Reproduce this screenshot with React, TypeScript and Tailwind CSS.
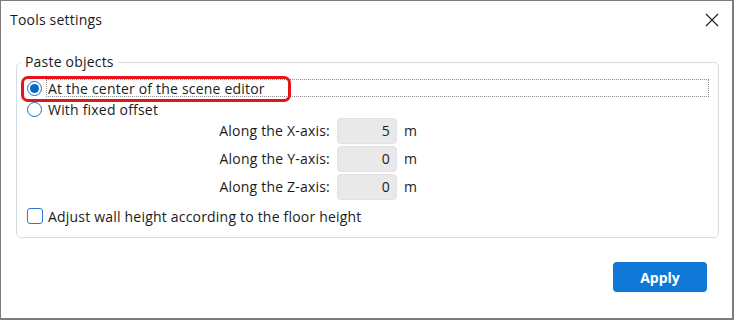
import React, { useState } from 'react';

const font = { fontFamily: '"Open Sans", "Noto Sans", sans-serif' };

const Radio: React.FC<{ checked: boolean }> = ({ checked }) => (
  <span className="flex h-[15px] w-[15px] shrink-0 items-center justify-center rounded-full border border-[#1a6fc9] bg-white">
    {checked && <span className="h-[9px] w-[9px] rounded-full bg-[#0a68c4]" />}
  </span>
);

const AxisRow: React.FC<{ label: string; value: string }> = ({ label, value }) => (
  <>
    <span className="text-right leading-[26px] text-[#1b1b1b]">{label}</span>
    <span className="h-[26px] rounded-[4px] border border-[#e2e2e2] bg-[#e9e9e9] pr-[6px] text-right leading-[24px] text-[#1b1b1b]">
      {value}
    </span>
    <span className="leading-[26px] text-[#1b1b1b]">m</span>
  </>
);

const App: React.FC = () => {
  const [mode] = useState<'center' | 'offset'>('center');

  return (
    <div
      className="relative flex h-[320px] w-[734px] flex-col border-t border-l border-r-2 border-b-2 border-[#7c7c7c] bg-white text-[14px] tracking-[0.2px]"
      style={font}
    >
      <div className="flex h-[37px] items-center justify-between pl-[9px] pr-[13px]">
        <span className="text-[14px] text-[#1a1a1a]">Tools settings</span>
        <svg width="14" height="14" viewBox="0 0 14 14" className="text-[#1f1f1f]">
          <path d="M1 1 L13 13 M13 1 L1 13" stroke="currentColor" strokeWidth="1.1" fill="none" />
        </svg>
      </div>

      <fieldset className="ml-[15px] mt-[15px] w-[703px] rounded-[5px] border border-[#d3dde6] px-[4px] pb-[12px]">
        <legend className="px-[4px] leading-[18px] text-[#1b1b1b]">Paste objects</legend>
        <div className="pl-[6px] pr-[5px]">
          <div className="mt-[8px] flex h-[18px] items-center gap-[4px]">
            <Radio checked={mode === 'center'} />
            <span className="flex h-[18px] flex-1 items-center border border-dotted border-[#8c8c8c] pl-[1px] text-[#1b1b1b]">
              At the center of the scene editor
            </span>
          </div>
          <div className="mt-[3px] flex h-[18px] items-center gap-[6px]">
            <Radio checked={mode === 'offset'} />
            <span className="text-[#1b1b1b]">With fixed offset</span>
          </div>
          <div className="grid grid-cols-[303px_60px_auto] gap-x-[7px] gap-y-[2px]">
            <AxisRow label="Along the X-axis:" value="5" />
            <AxisRow label="Along the Y-axis:" value="0" />
            <AxisRow label="Along the Z-axis:" value="0" />
          </div>
          <div className="mt-[7px] flex h-[18px] items-center gap-[5px]">
            <span className="h-[16px] w-[16px] shrink-0 rounded-[3px] border border-[#2a78d4] bg-white" />
            <span className="text-[#1b1b1b]">Adjust wall height according to the floor height</span>
          </div>
        </div>
      </fieldset>

      <div className="mt-[24px] flex justify-end pr-[25px]">
        <button className="h-[30px] w-[94px] rounded-[4px] bg-[#0f78d7] text-[14px] font-bold tracking-normal text-white">
          Apply
        </button>
      </div>

      <div className="pointer-events-none absolute left-[20px] top-[75px] h-[26px] w-[270px] rounded-[7px] border-[3px] border-[#e8121b]" />
    </div>
  );
};

export default App;
